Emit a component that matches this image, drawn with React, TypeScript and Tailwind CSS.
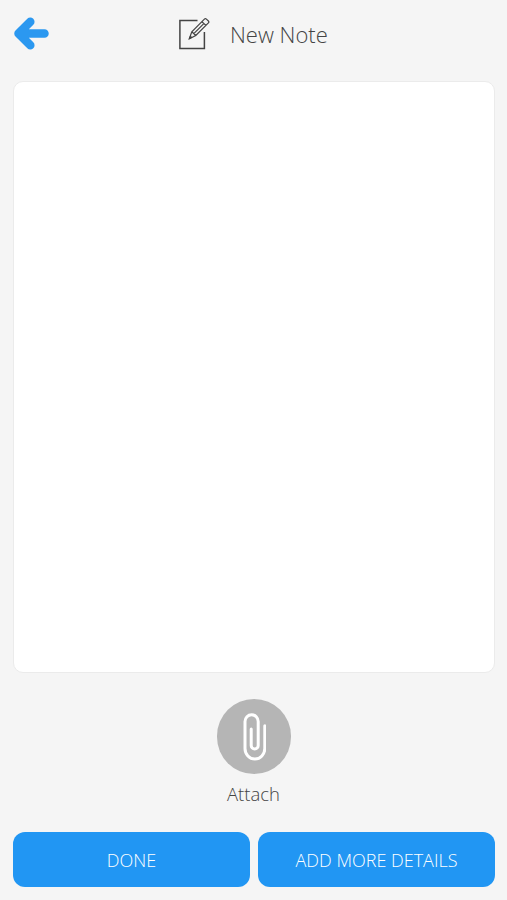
function BackArrow() {
  return (
    <svg width="36" height="34" viewBox="0 0 36 34" fill="none" stroke="#2b98f0" strokeWidth="8.5" strokeLinecap="round" strokeLinejoin="round">
      <path d="M17.3 4.7L5.5 16.5L17.3 28.3M6.5 16.5H31.5" />
    </svg>
  )
}

function NoteIcon() {
  return (
    <svg width="32" height="34" viewBox="0 0 32 34" fill="none" stroke="#444444" strokeWidth="1.5">
      <path d="M19.5 4.5H1.9V32.5H26.4V16" />
      <path d="M11.3 22.8L13.8 15.8L26.4 3.2Q27.4 2.2 28.4 3.1L30.4 5Q31.3 5.9 30.4 6.9L17.8 19.5L11.3 22.8ZM13.8 15.8L17.8 19.5M23.9 5.7L27.9 9.4M15.8 17.6L25.8 7.6" strokeWidth="1.2" />
      <path d="M11.3 22.8L12.3 20L14 21.4Z" fill="#444444" strokeWidth="0.8" />
    </svg>
  )
}

function PaperclipIcon() {
  return (
    <svg width="24" height="48" viewBox="0 0 24 48" fill="none" stroke="#ffffff" strokeWidth="3" strokeLinecap="round">
      <path d="M22.8 12.8V35.5A9.9 10.5 0 0 1 3 35.5V8.5A6.6 6.8 0 0 1 16.2 8.5V32.5A3.5 3.5 0 0 1 9.2 32.5V16" />
    </svg>
  )
}

export default function App() {
  return (
    <div className="h-screen flex flex-col bg-[#f5f5f5] font-['Open_Sans',sans-serif] font-light text-[#444444]">
      {/* Header */}
      <header className="h-[81px] shrink-0 grid grid-cols-[165px_1fr] items-start">
        <button aria-label="Back" className="ml-[13px] mt-[17px] w-9">
          <BackArrow />
        </button>
        <div className="flex items-start pl-[13px] pt-4">
          <NoteIcon />
          <h1 className="ml-5 text-[22px] leading-9 whitespace-nowrap">New Note</h1>
        </div>
      </header>

      {/* Note body */}
      <textarea
        aria-label="Note"
        className="block ml-[13px] mr-3 h-[592px] shrink-0 resize-none rounded-[10px] border border-[#ebebeb] bg-white outline-none p-3"
      />

      {/* Attachment */}
      <div className="flex justify-center pt-[26px]">
        <button className="flex flex-col items-center">
          <span className="w-[74px] h-[75px] rounded-full bg-[#b5b5b5] flex items-center justify-center">
            <PaperclipIcon />
          </span>
          <span className="mt-1.5 text-[18.5px] leading-7">Attach</span>
        </button>
      </div>

      {/* Actions */}
      <div className="mt-auto mb-[13px] ml-[13px] mr-3 grid grid-cols-2 gap-2">
        <button className="h-[55px] rounded-xl bg-[#2196f3] text-white text-lg">DONE</button>
        <button className="h-[55px] rounded-xl bg-[#2196f3] text-white text-lg">ADD MORE DETAILS</button>
      </div>
    </div>
  )
}
